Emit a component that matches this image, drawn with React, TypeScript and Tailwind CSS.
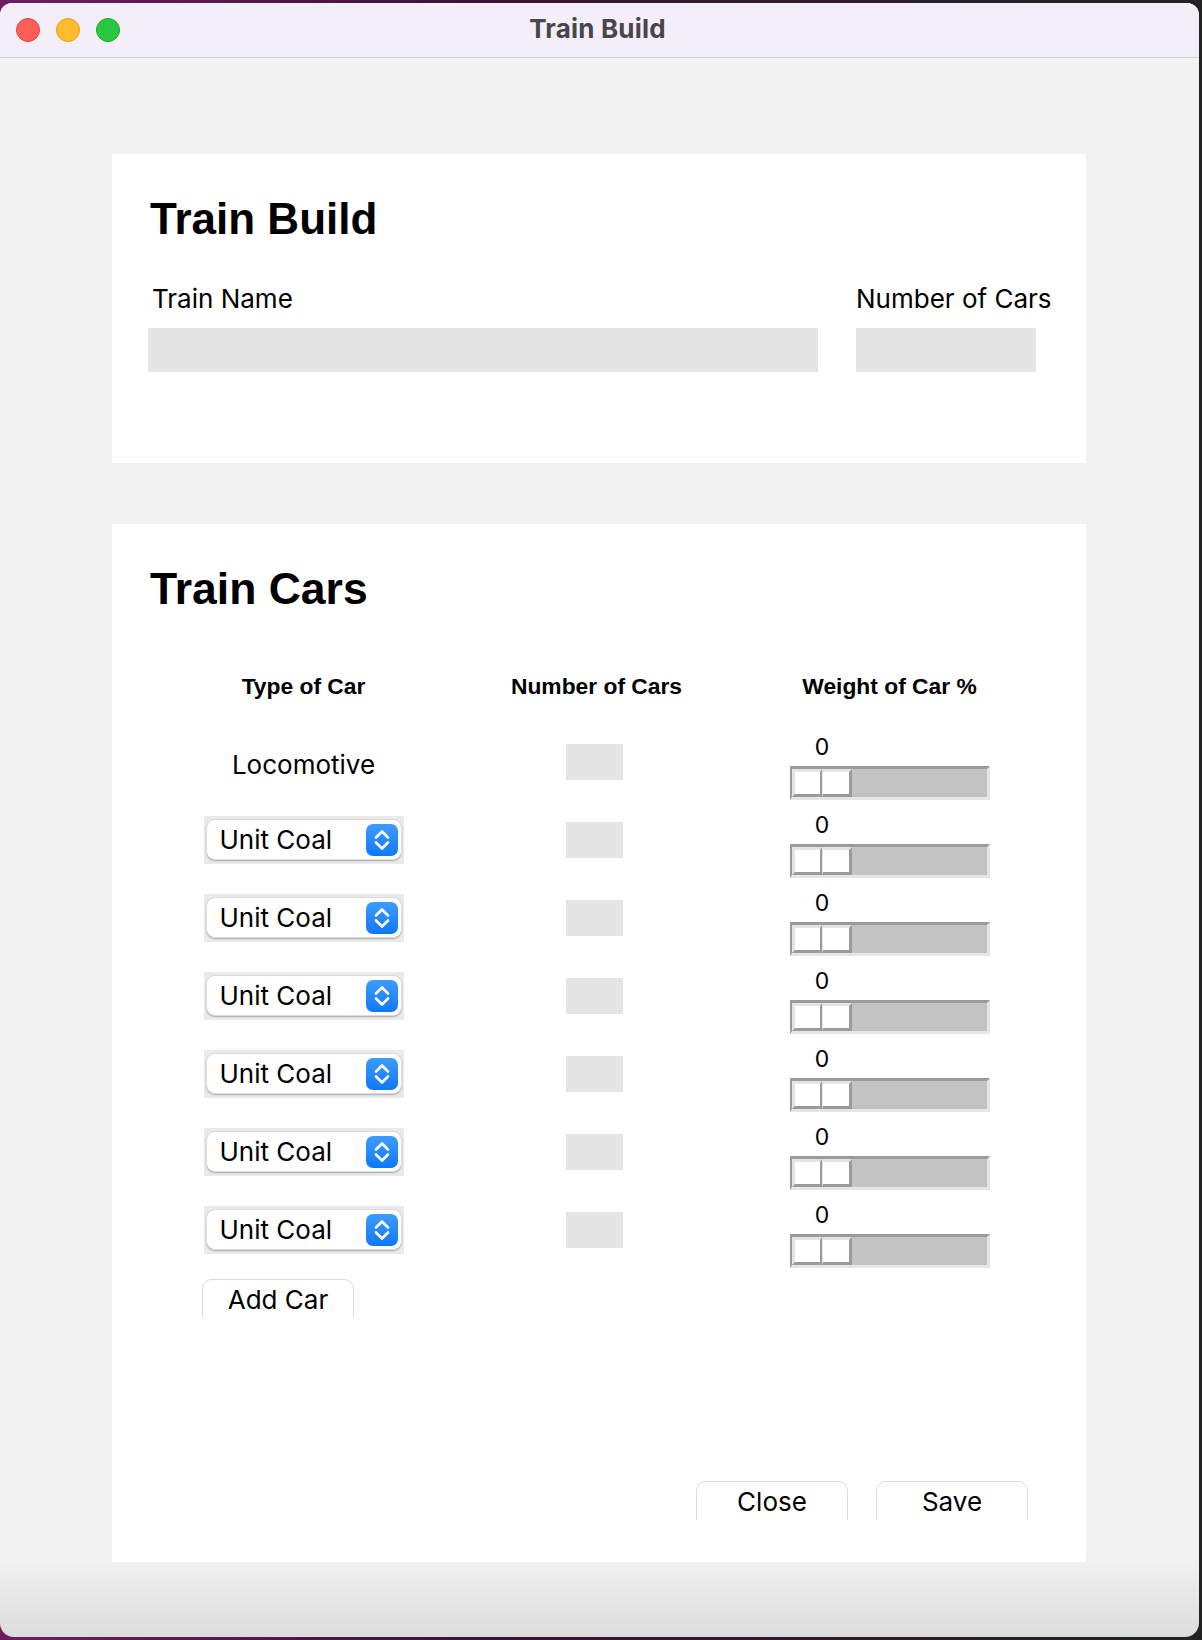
import React from "react";

function Chevrons() {
  return (
    <svg width="32" height="32" viewBox="0 0 32 32" fill="none">
      <path d="M10 13.5 L16 7.5 L22 13.5" stroke="white" strokeWidth="2.6" strokeLinecap="round" strokeLinejoin="round" />
      <path d="M10 18.5 L16 24.5 L22 18.5" stroke="white" strokeWidth="2.6" strokeLinecap="round" strokeLinejoin="round" />
    </svg>
  );
}

function Select() {
  return (
    <div className="w-[200px] h-[48px] bg-[#eaeaea] pt-[3px] px-[2px]">
      <div className="h-[41px] rounded-[9px] bg-white border border-[#dcdcdc] shadow-[0_1px_1.5px_rgba(0,0,0,0.28)] flex items-center justify-between pl-[13px] pr-[3px]">
        <span className="text-[26px] leading-[32px] text-black">Unit Coal</span>
        <div className="w-[32px] h-[32px] rounded-[7px] bg-gradient-to-b from-[#3d9cff] to-[#0b78fb] flex items-center justify-center">
          <Chevrons />
        </div>
      </div>
    </div>
  );
}

function Slider() {
  return (
    <div className="flex flex-col pl-[47px]">
      <div className="h-[33px] w-[64px] pt-[0px] text-center text-[23px] leading-[28px] text-black">
        0
      </div>
      <div className="w-[200px] h-[34px] bg-[#c3c3c3] border-t-[3px] border-l-[2px] border-b-[3px] border-r-[3px] border-t-[#9b9b9b] border-l-[#9b9b9b] border-b-[#e6e6e6] border-r-[#e6e6e6] flex">
        <div className="w-[30px] h-full bg-white border-t-[3px] border-l-[3px] border-b-[3px] border-r-[2px] border-t-[#e4e4e4] border-l-[#e4e4e4] border-b-[#9b9b9b] border-r-[#9b9b9b]" />
        <div className="w-[30px] h-full bg-white border-t-[3px] border-l-[1px] border-b-[3px] border-r-[3px] border-t-[#e4e4e4] border-l-[#e4e4e4] border-b-[#9b9b9b] border-r-[#9b9b9b]" />
      </div>
    </div>
  );
}

function MacButton({ label, h = 39 }: { label: string; h?: number }) {
  return (
    <div className={h === 38 ? "h-[38px] w-[152px] overflow-hidden" : "h-[39px] w-[152px] overflow-hidden"}>
      <div className="h-[50px] rounded-[10px] bg-white border border-[#dadada] flex justify-center pt-[3.5px]">
        <span className="text-[26px] leading-[32px] text-black">{label}</span>
      </div>
    </div>
  );
}

export default function App() {
  const rows = ["Locomotive", "Unit Coal", "Unit Coal", "Unit Coal", "Unit Coal", "Unit Coal", "Unit Coal"];
  return (
    <div className="w-[1202px] h-[1640px] overflow-hidden pt-[3px] pr-[3px] bg-[linear-gradient(to_right,#6d1d5f,#3b1436_40%,#232323)] font-['Inter',sans-serif]">
      <div className="w-[1199px] h-[1634px] rounded-t-[12px] rounded-b-[14px] overflow-hidden flex flex-col bg-[linear-gradient(to_bottom,#f2f2f2_95%,#dcdcdc)]">
        {/* Title bar */}
        <div className="h-[55px] shrink-0 bg-[#f3eef8] border-b border-[#d2d0d5] flex items-center">
          <div className="w-[130px] pl-[16px] flex gap-[16px] pb-[1px]">
            <div className="w-[24px] h-[24px] rounded-full bg-[#ff5f57] border border-[#e2463f]" />
            <div className="w-[24px] h-[24px] rounded-full bg-[#febc2e] border border-[#e1a116]" />
            <div className="w-[24px] h-[24px] rounded-full bg-[#28c840] border border-[#1aab29]" />
          </div>
          <div className="flex-1 text-center text-[26px] leading-[30px] font-bold tracking-[0.2px] text-[#48464c] pb-[3px] pr-[4px]">Train Build</div>
          <div className="w-[130px]" />
        </div>

        {/* Body */}
        <div className="flex-1 flex flex-col pl-[112px] pt-[96px]">
          {/* Card 1 */}
          <div className="w-[974px] h-[309px] bg-white pt-[43px] pl-[36px]">
            <h1 className="ml-[2px] font-['Liberation_Sans',Arial,sans-serif] font-bold text-[44px] leading-[44px] text-black">
              Train Build
            </h1>
            <div className="mt-[42px] flex gap-[38px]">
              <div className="w-[670px]">
                <div className="ml-[4px] text-[26px] leading-[32px] text-black">Train Name</div>
                <div className="mt-[13px] h-[44px] bg-[#e5e5e5]" />
              </div>
              <div>
                <div className="text-[26px] leading-[32px] text-black whitespace-nowrap">Number of Cars</div>
                <div className="mt-[13px] w-[180px] h-[44px] bg-[#e5e5e5]" />
              </div>
            </div>
          </div>

          {/* Card 2 */}
          <div className="mt-[61px] w-[974px] h-[1038px] bg-white pt-[43px]">
            <h1 className="ml-[38px] font-['Liberation_Sans',Arial,sans-serif] font-bold text-[44.5px] leading-[44px] text-black">
              Train Cars
            </h1>
            <div className="ml-[45px] w-[879px]">
              <div className="mt-[62px] grid grid-cols-3 text-center font-['Liberation_Sans',Arial,sans-serif] font-bold text-[22.8px] leading-[26px] text-black">
                <div>Type of Car</div>
                <div>Number of Cars</div>
                <div>Weight of Car %</div>
              </div>
              <div className="mt-[34px] flex flex-col">
                {rows.map((r, i) => (
                  <div key={i} className="h-[78px] grid grid-cols-3">
                    <div className={i === 0 ? "flex justify-center pt-[16px]" : "flex justify-center pt-[5px]"}>
                      {i === 0 ? (
                        <span className="text-[26px] leading-[32px] text-black">{r}</span>
                      ) : (
                        <Select />
                      )}
                    </div>
                    <div className="flex justify-center pt-[11px] pr-[4px]">
                      <div className="w-[57px] h-[36px] bg-[#e5e5e5]" />
                    </div>
                    <Slider />
                  </div>
                ))}
              </div>
              <div className="ml-[45px]">
                <MacButton label="Add Car" h={38} />
              </div>
              <div className="mt-[164px] flex justify-end gap-[28px] pr-[8px]">
                <MacButton label="Close" />
                <MacButton label="Save" />
              </div>
            </div>
          </div>
        </div>
      </div>
    </div>
  );
}
